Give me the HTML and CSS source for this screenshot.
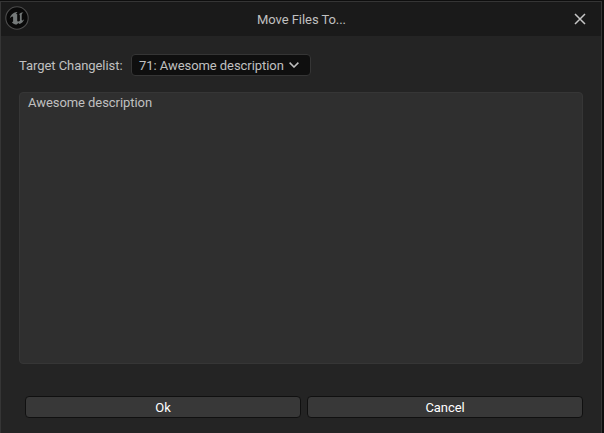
FILE: index.html
```html
<!DOCTYPE html>
<html lang="en">
<head>
<meta charset="utf-8">
<title>Move Files To...</title>
<link rel="stylesheet" href="styles.css">
</head>
<body>
<main class="window">
  <header class="titlebar">
    <svg class="logo" width="24" height="24" viewBox="0 0 24 24">
      <circle cx="12" cy="12" r="11.2" fill="#090909" stroke="#4c4c4c" stroke-width="1.1"/>
      <path fill="#747979" d="M11.500 6C8 6.700 5.400 9 4.700 12.600c.9-1.300 1.800-2.100 2.700-2.100.5 0 .7.300.7.800v4c0 .7-.6 1-1.300.9 1.300 1.500 3 2.300 5 2.300l1.500-1.500 1.300 1.100c2.200-.8 3.900-2.500 4.600-4.800-.9.900-1.600 1.300-2.100 1.100-.3-.1-.4-.4-.4-.8V9c0-1.100.8-1.900 1.900-2.700-1.900.2-3.500.8-4.600 1.900.6.100.9.500.9 1v5.600c-.5.500-1 .7-1.500.7-.8 0-1.200-.4-1.200-1V8c-.4 0-.8.100-1.200.300.400-.9.700-1.700 1.500-2.300z"/>
    </svg>
    <h1 class="title">Move Files To...</h1>
    <svg class="close" width="12" height="12" viewBox="0 0 12 12">
      <path d="M1 1L11 11M11 1L1 11" fill="none" stroke="#c6c6c6" stroke-width="1.5"/>
    </svg>
  </header>
  <section class="content">
    <div class="target">
      <span class="label">Target Changelist:</span>
      <button class="select">
        <span>71: Awesome description</span>
        <svg width="10" height="6" viewBox="0 0 10 6">
          <path d="M.6.6L5 5 9.400.6" fill="none" stroke="#c0c0c0" stroke-width="1.5"/>
        </svg>
      </button>
    </div>
    <div class="description">Awesome description</div>
    <footer class="actions">
      <button class="action">Ok</button>
      <button class="action">Cancel</button>
    </footer>
  </section>
</main>
</body>
</html>
```
FILE: styles.css
```css
* { box-sizing: border-box; }
body {
  margin: 0;
  height: 433px;
  overflow: hidden;
  padding: 1px 2px 0 0;
  background: #0e0e0e;
  color: #c0c0c0;
  font: 13px/16px Roboto, sans-serif;
  letter-spacing: -0.06px;
}
button { font: inherit; color: inherit; letter-spacing: inherit; }
.window {
  height: 432px;
  border: 1px solid #353535;
  border-bottom: 0;
  background: #242424;
}
.titlebar {
  height: 34px;
  display: grid;
  grid-template-columns: 24px 1fr 24px;
  align-items: center;
  padding: 0 4px;
  background: #1a1a1a;
}
.logo { margin-top: -2px; }
.title {
  margin: 2px 0 0 1px;
  font-size: 13px;
  font-weight: 400;
  text-align: center;
}
.close { margin: 0 0 0 1px; }
.content { padding: 18px 18px 0; }
.target {
  display: flex;
  align-items: center;
  height: 22px;
}
.label { width: 112px; padding-top: 2px; white-space: nowrap; }
.select {
  width: 180px;
  height: 22px;
  display: flex;
  align-items: center;
  gap: 5px;
  padding: 0 7px;
  background: #0f0f0f;
  border: 1px solid #353535;
  border-radius: 4px;
  white-space: nowrap;
}
.select span { padding-top: 2px; }
.description {
  width: 564px;
  height: 272px;
  margin-top: 16px;
  padding: 2px 8px;
  background: #2f2f2f;
  border: 1px solid #363636;
  border-radius: 4px;
}
.actions {
  display: grid;
  grid-template-columns: 276px 276px;
  gap: 6px;
  margin: 32px 0 0 6px;
}
.action {
  height: 22px;
  padding: 2px 0 0;
  color: #fff;
  background: #383838;
  border: 1px solid #101010;
  border-radius: 4px;
}
```
